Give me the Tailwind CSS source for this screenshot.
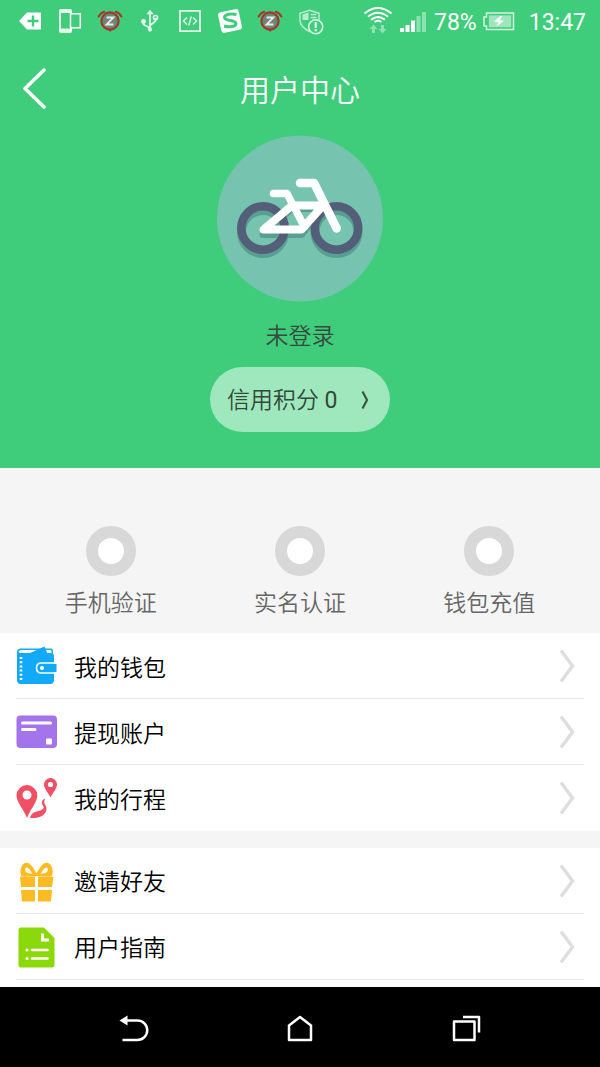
<!DOCTYPE html>
<html lang="zh-CN">
<head>
<meta charset="utf-8">
<meta name="viewport" content="width=device-width, initial-scale=1">
<title>用户中心</title>
<script src="https://cdn.jsdelivr.net/npm/@tailwindcss/browser@4"></script>
</head>
<body class="flex h-screen flex-col overflow-hidden bg-[#f5f5f5] font-['Roboto','Noto_Sans_CJK_SC',sans-serif]">

<svg class="hidden" aria-hidden="true">
  <symbol id="alarm" viewBox="0 0 40 44">
    <circle cx="20" cy="21" r="8.6" fill="#71847a" stroke="#a2372c" stroke-width="2.2"/>
    <path d="M8.600 16.500q2-3.800 5.600-4.800M31.400 16.500q-2-3.800-5.600-4.800" fill="none" stroke="#a2372c" stroke-width="2" stroke-linecap="round"/>
    <path d="M18 29.500h4l-2 2.500z" fill="#a2372c"/>
    <path d="M16.500 17.500h7l-7 7h7" fill="none" stroke="#e3eee7" stroke-width="1.800"/>
  </symbol>
  <symbol id="chevron" viewBox="0 0 16 34">
    <path d="M1 1.500L12.500 17L1 32.500" fill="none" stroke="#dedede" stroke-width="3.500"/>
  </symbol>
</svg>

<header class="flex shrink-0 flex-col bg-[#3fcd7b]">
  <div class="flex h-11 items-center pl-[10px] pr-[14px] text-white">
    <div class="flex">
      <svg class="h-11 w-10" viewBox="0 0 40 44"><path d="M9 21l8-8.500h14v17H17z" fill="#fff"/><path d="M23 15.500v11M17.500 21h11" stroke="#3fcd7b" stroke-width="2.400"/></svg>
      <svg class="h-11 w-10" viewBox="0 0 40 44"><rect x="9" y="9" width="13" height="24" rx="2" fill="#e4f8ec"/><path d="M11 13h9.500v15.500H11z" fill="#3fcd7b"/><path d="M20.500 13.800h9.800v14h-9.800z" fill="#3fcd7b" stroke="#fff" stroke-width="1.500"/></svg>
      <svg class="h-11 w-10"><use href="#alarm"/></svg>
      <svg class="h-11 w-10" viewBox="0 0 40 44" fill="none" stroke="#e4f8ec" stroke-width="1.700"><path d="M20 12v18M20 28l-6.500-3.500V21M20 25.500l5.500-4.500V18"/><path d="M18 13.500L20 11l2 2.500z" fill="#fff"/><circle cx="13.500" cy="21.500" r="1.600" fill="#fff"/><circle cx="25.500" cy="17.500" r="2"/><circle cx="20" cy="29.500" r="1.300" fill="#fff"/></svg>
      <svg class="h-11 w-10" viewBox="0 0 40 44" fill="none" stroke="#e4f8ec"><path d="M10 10.800h20v20.400H10z" stroke-width="1.800"/><path d="M17 17.500l-3.500 3.500 3.500 3.500M23 17.500l3.500 3.500-3.500 3.500M21.300 16.500l-2.600 9" stroke-width="1.400"/></svg>
      <svg class="h-11 w-10" viewBox="0 0 40 44"><rect x="9.500" y="10.500" width="21" height="21" rx="3" fill="#fff" transform="rotate(-12 20 21)"/><path d="M26.500 14.500c-5-1-12-.5-12 3 0 4 11.500 2 11.500 6 0 3.300-7 4-12 2.500" fill="none" stroke="#3fcd7b" stroke-width="3"/></svg>
      <svg class="h-11 w-10"><use href="#alarm"/></svg>
      <svg class="h-11 w-10" viewBox="0 0 40 44" fill="none" stroke="#b9edcd"><path d="M19.500 10.200l9.500 3v7c0 5-4 8.500-9.500 11.300-5.500-2.800-9.500-6.300-9.500-11.300v-7z" stroke-width="1.500"/><path d="M12.500 14.500l6-2v7.500h-6z" fill="#b9edcd" stroke="none"/><path d="M20.500 14.500h6M20.500 17.500h6" stroke-width="1.500"/><circle cx="25.700" cy="26.800" r="7" fill="#3fcd7b" stroke="#d9f6e4" stroke-width="1.600"/><path d="M25.700 22v6M25.700 29.300v2" stroke="#fff" stroke-width="2"/></svg>
    </div>
    <div class="ml-auto flex items-center">
      <svg class="h-11 w-9" viewBox="0 0 36 44" fill="none"><path d="M4.500 13.500q13.500-11 27 0M8 16.800q10-8 20 0M11 19.800q7-5.500 14 0M14.500 22q3.500-2.500 7 0" stroke="#fff" stroke-width="1.900"/><path d="M13.500 24.500l4 4.500h-2.500v4h-3v-4H9.500zM22.500 33.500l4-4.500H24v-4h-3v4h-2.500z" fill="#8fe2b3"/></svg>
      <svg class="h-11 w-8" viewBox="0 0 32 44"><path d="M4 28h4v4H4zM9.500 25h4v7h-4zM15 20.500h4V32h-4z" fill="#fff"/><path d="M20.500 16h4v16h-4zM26 12h4v20h-4z" fill="#8be1b0"/></svg>
      <span class="ml-1.5 text-[23px] leading-none">78%</span>
      <svg class="ml-1 h-11 w-9" viewBox="0 0 36 44"><path d="M5.500 13h27v16.500h-27v-3.500H3v-9h2.500z" fill="none" stroke="#d5f5e1" stroke-width="1.500"/><path d="M7.800 15.300h22.400v11.900H7.800z" fill="#9fe6bd"/><path d="M19.500 16l-6.500 5.500 4.500.8-2 4.200 7.500-5.700-4.500-.8 3-4z" fill="#fff"/></svg>
      <time class="ml-3 text-[23px] leading-none">13:47</time>
    </div>
  </div>

  <div class="grid h-[91px] grid-cols-[72px_1fr_72px] items-center">
    <button type="button" aria-label="返回" class="flex h-full items-center pl-5">
      <svg class="h-11 w-7" viewBox="0 0 28 44" fill="none"><path d="M24 2L5 20.500L24 39" stroke="#fff" stroke-width="3.500" stroke-linecap="round" stroke-linejoin="round"/></svg>
    </button>
    <h1 class="pt-[3px] text-center text-[30px] font-[350] leading-10 text-white">用户中心</h1>
  </div>

  <div class="flex flex-col items-center pb-9">
    <svg class="size-[167px]" viewBox="0 0 167 167" role="img" aria-label="自行车头像">
      <circle cx="83" cy="83.500" r="83" fill="#76c3b0"/>
      <g fill="none" stroke="#599f91" stroke-width="9" stroke-linejoin="round" transform="translate(0 4)">
        <circle cx="46" cy="93" r="21.500"/><circle cx="119.500" cy="93" r="21.500"/>
        <path d="M46 95.500l29-26h30L84.500 95.500z" stroke-width="7"/>
      </g>
      <g fill="none" stroke="#535e78" stroke-width="8.500"><circle cx="46" cy="93" r="21.700"/><circle cx="119.500" cy="93" r="21.700"/></g>
      <g fill="none" stroke="#fff" stroke-width="8.500" stroke-linecap="round" stroke-linejoin="round">
        <path d="M83 48h14l22.700 45.500"/>
        <path d="M56.500 58.500h13.500l5.500 10.500 12 23" stroke-width="7.500"/>
        <path d="M46.500 94.500l28.500-24h31L84.500 94.500z" stroke-width="8"/>
      </g>
    </svg>
    <p class="mt-[17px] text-[23px] font-[350] leading-9 text-[#354a3c]">未登录</p>
    <button type="button" class="mt-3 flex h-[65px] w-[180px] items-center rounded-full bg-[#9fe8bd] px-[17px] text-[23px] text-[#33483b]">
      <span class="pt-[3px] font-[350]">信用积分 <span class="font-normal">0</span></span>
      <svg class="ml-auto h-5 w-3" viewBox="0 0 12 20" fill="none"><path d="M1.500 1.500L6 10l-4.500 8.500" stroke="#3d5446" stroke-width="2.200"/></svg>
    </button>
  </div>
</header>

<main class="flex-1 overflow-hidden">
  <ul class="grid grid-cols-3 px-4 pb-[11px] pt-[58px] text-[23px] font-[350] leading-9 text-[#666]">
    <li class="flex flex-col items-center gap-[10px]"><span class="size-[50px] rounded-full border-[12px] border-[#d8d8d8] bg-white"></span>手机验证</li>
    <li class="flex flex-col items-center gap-[10px]"><span class="size-[50px] rounded-full border-[12px] border-[#d8d8d8] bg-white"></span>实名认证</li>
    <li class="flex flex-col items-center gap-[10px]"><span class="size-[50px] rounded-full border-[12px] border-[#d8d8d8] bg-white"></span>钱包充值</li>
  </ul>

  <nav class="flex flex-col gap-[17px] text-[23px] font-[350] text-black">
    <div class="bg-white px-4">
      <a href="#" class="flex h-[66px] items-center border-b border-[#e8e8e8] pt-px">
        <svg class="mr-4 size-[42px]" viewBox="0 0 42 42"><path d="M1 7q0-3.500 4-3.500h30q2 0 2 3v2.500q1 0 1 1.500V35q0 4-4 4H5q-4 0-4-4z" fill="#12aaf8"/><path d="M5 5h29.500q1 0 1 1.500V8H5q-3-.5-2.500-1.500T5 5z" fill="#fff"/><path d="M13 8.500L28.500 1.500l3 7z" fill="#12aaf8"/><path d="M5 12v24" stroke="#fff" stroke-width="2.600" stroke-dasharray="2 2.200"/><path d="M38 18H25.500q-5 0-5 5t5 5H38" fill="#12aaf8" stroke="#fff" stroke-width="1.600"/><path d="M35 19h5.500v8H35z" fill="#12aaf8"/><circle cx="26" cy="23" r="2" fill="#fff"/></svg>
        <span class="pt-1.5">我的钱包</span><svg class="ml-auto mr-2 h-[34px] w-4"><use href="#chevron"/></svg>
      </a>
      <a href="#" class="flex h-[66px] items-center border-b border-[#e8e8e8] pt-px">
        <svg class="mr-4 size-[42px]" viewBox="0 0 42 42"><rect x="0.500" y="4.500" width="40.500" height="32.500" rx="4" fill="#a374ec"/><path d="M6.500 12h28M6.500 18.500h12.500" stroke="#fff" stroke-width="3" stroke-linecap="round"/><rect x="30" y="27.500" width="6" height="6" rx="1" fill="#fff"/></svg>
        <span class="pt-1.5">提现账户</span><svg class="ml-auto mr-2 h-[34px] w-4"><use href="#chevron"/></svg>
      </a>
      <a href="#" class="flex h-[66px] items-center">
        <svg class="mr-4 size-[42px]" viewBox="0 0 42 42"><path d="M11 41C8 33 0.500 25 0.500 18.500a10.400 10.400 0 0120.800 0C21.300 25 14 33 11 41z" fill="#f04f64"/><circle cx="11" cy="18" r="4.500" fill="#fff"/><path d="M34.500 20.500C33 16.500 28 12 28 7.500a6.500 6.500 0 0113 0c0 4.500-5 9-6.500 13z" fill="#f04f64"/><circle cx="34.500" cy="7.500" r="2.600" fill="#fff"/><path d="M29.500 21.500c-5.500 2-3.500 5.500-2 8 1 3-3 4-8.500 5.500-3 1-4.500 3.500-5 6 10 .5 16-3 16.500-9 .3-4-4.500-6-1-10.500z" fill="#f04f64"/></svg>
        <span class="pt-1.5">我的行程</span><svg class="ml-auto mr-2 h-[34px] w-4"><use href="#chevron"/></svg>
      </a>
    </div>
    <div class="bg-white px-4">
      <a href="#" class="flex h-[66px] items-center border-b border-[#e8e8e8]">
        <svg class="mr-4 size-[42px]" viewBox="0 0 42 42"><path d="M4 16.500h15v10.500H5zM22 16.500h15.500l-1.500 10.500H22zM5 30h14v11.500H6zM22 30h14l-1 11.500H22z" fill="#fcbb22"/><path d="M20.500 16C17 9 12 .5 7.500 5.500 4.500 10 6 15 6.500 15h12.500M20.500 16C24 9 29 .5 33.500 5.500 37 10 35 15 34.500 15H22" fill="#fcbb22" stroke="#fcbb22" stroke-width="2.500" stroke-linejoin="round"/><path d="M16.500 14Q12 5.500 9.500 8q-2.500 5 7 6zM24.500 14Q29 5.500 31.500 8q2.500 5-7 6z" fill="#fff"/></svg>
        <span class="pt-1.5">邀请好友</span><svg class="ml-auto mr-2 h-[34px] w-4"><use href="#chevron"/></svg>
      </a>
      <a href="#" class="flex h-[66px] items-center border-b border-[#e8e8e8]">
        <svg class="mr-4 size-[42px]" viewBox="0 0 42 42"><path d="M5 1.500h23L38.500 12v27q0 2.500-2.500 2.500H5Q2.500 41.500 2.500 39V4Q2.500 1.500 5 1.500z" fill="#8bd90b"/><path d="M26.500 7.500V14h6.500" fill="none" stroke="#fff" stroke-width="3"/><path d="M16 24h15.500M16 32.500h15.500" stroke="#fff" stroke-width="2.600" stroke-linecap="round"/><circle cx="11" cy="24" r="1.600" fill="#fff"/><circle cx="11" cy="32.500" r="1.600" fill="#fff"/></svg>
        <span class="pt-1.5">用户指南</span><svg class="ml-auto mr-2 h-[34px] w-4"><use href="#chevron"/></svg>
      </a>
      <div class="h-16"></div>
    </div>
  </nav>
</main>

<footer class="flex h-20 shrink-0 items-center justify-center gap-[126px] bg-black">
  <button type="button" aria-label="返回键"><svg class="size-10" viewBox="0 0 40 40" fill="none"><path d="M12 13.500h12.500a9.500 9.500 0 010 19.500H9.500" stroke="#fff" stroke-width="2.500" transform="translate(-1 0)"/><path d="M5.500 13.500l8-5v10z" fill="#fff"/></svg></button>
  <button type="button" aria-label="主屏幕"><svg class="size-10" viewBox="0 0 40 40" fill="none"><path d="M9 33V18.500L20 10l11 8.500V33z" stroke="#fff" stroke-width="2.500" stroke-linejoin="round"/></svg></button>
  <button type="button" aria-label="最近任务"><svg class="size-10" viewBox="0 0 40 40" fill="none"><path d="M8 14.500h20.500V33H8zM17 10h16v15.500" stroke="#fff" stroke-width="2.500" stroke-linejoin="round"/></svg></button>
</footer>
</body>
</html>
